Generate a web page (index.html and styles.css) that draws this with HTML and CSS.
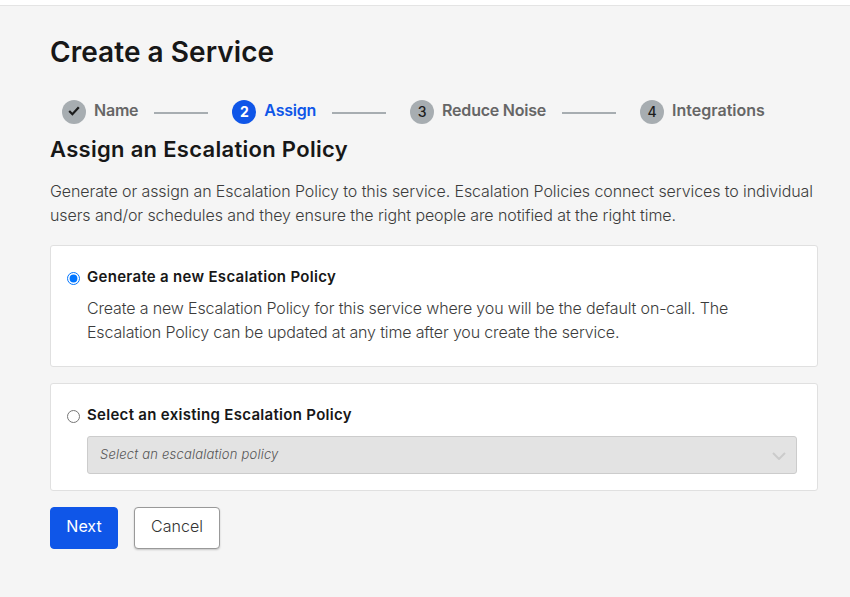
FILE: index.html
```html
<!DOCTYPE html>
<html lang="en">
<head>
    <meta charset="UTF-8">
    <title>Create a Service</title>
    <link rel="stylesheet" href="styles.css">
</head>
<body>
    <div class="page">
        <h1>Create a Service</h1>

        <!-- steps -->
        <div class="steps">
            <div class="step">
                <span class="badge">
                    <svg width="12" height="10" viewBox="0 0 12 10"><path d="M1.2 5 L4.4 8.2 L10.8 1.2" fill="none" stroke="#1c1c1c" stroke-width="2.2"/></svg>
                </span>
                <span class="step-name">Name</span>
            </div>
            <div class="line"></div>
            <div class="step active">
                <span class="badge">2</span>
                <span class="step-name">Assign</span>
            </div>
            <div class="line"></div>
            <div class="step">
                <span class="badge">3</span>
                <span class="step-name">Reduce Noise</span>
            </div>
            <div class="line"></div>
            <div class="step">
                <span class="badge">4</span>
                <span class="step-name">Integrations</span>
            </div>
        </div>

        <h2>Assign an Escalation Policy</h2>
        <p class="intro">Generate or assign an Escalation Policy to this service. Escalation Policies connect services to individual users and/or schedules and they ensure the right people are notified at the right time.</p>

        <div class="card card-new">
            <label class="option">
                <input type="radio" name="policy" checked>
                <span>Generate a new Escalation Policy</span>
            </label>
            <p class="option-text">Create a new Escalation Policy for this service where you will be the default on-call. The Escalation Policy can be updated at any time after you create the service.</p>
        </div>

        <div class="card card-existing">
            <label class="option">
                <input type="radio" name="policy">
                <span>Select an existing Escalation Policy</span>
            </label>
            <div class="select">
                <span>Select an escalalation policy</span>
                <svg width="14" height="8" viewBox="0 0 14 8"><path d="M1 1 L7 7 L13 1" fill="none" stroke="#cbcbcb" stroke-width="2"/></svg>
            </div>
        </div>

        <div class="buttons">
            <button class="button primary">Next</button>
            <button class="button">Cancel</button>
        </div>
    </div>
</body>
</html>
```

FILE: styles.css
```css
* {
    box-sizing: border-box;
}

body {
    font-family: "Inter", "Liberation Sans", sans-serif;
    background-color: #ffffff;
    color: #171717;
    margin: 0;
    padding: 0;
}

.page {
    height: 592px;
    margin-top: 5px;
    padding: 30px 32px 0 50px;
    background-color: #f5f5f5;
    border-top: 1px solid #e4e4e4;
}

h1 {
    margin: 0;
    font-size: 28px;
    line-height: 32px;
    font-weight: 600;
    letter-spacing: 0.05px;
}

/* steps */
.steps {
    display: flex;
    align-items: flex-start;
    margin-top: 32px;
    padding-left: 12px;
    height: 24px;
}

.step {
    display: flex;
    align-items: center;
}

.badge {
    display: flex;
    align-items: center;
    justify-content: center;
    width: 24px;
    height: 24px;
    padding-bottom: 2px;
    border-radius: 50%;
    background: #a7adb1;
    color: #1c1c1c;
    font-size: 14px;
    font-weight: 500;
}

.step-name {
    margin-left: 8px;
    margin-top: -4px;
    font-size: 16px;
    font-weight: 600;
    letter-spacing: -0.22px;
    color: #666666;
    line-height: 22px;
}

.step:last-child .step-name {
    letter-spacing: 0;
}

.active .badge {
    background: #0f56e8;
    color: #ffffff;
    font-weight: 700;
}

.active .step-name {
    color: #0f56e8;
}

.line {
    width: 54px;
    height: 2px;
    margin: 12px 24px 0 16px;
    background: #a7adb1;
}

h2 {
    margin: 11px 0 0;
    font-size: 22px;
    line-height: 28px;
    font-weight: 600;
    letter-spacing: 0.3px;
}

.intro {
    margin: 16px 0 0;
    font-size: 16px;
    line-height: 24px;
    font-weight: 300;
    letter-spacing: -0.09px;
    color: #3c3c3c;
}

/* cards */
.card {
    background: #ffffff;
    border: 1px solid #e0e0e0;
    border-radius: 3px;
    padding: 21px 20px 0 16px;
}

.card-new {
    height: 122px;
    margin-top: 18px;
}

.card-existing {
    height: 108px;
    margin-top: 16px;
}

.option {
    display: flex;
    align-items: center;
    font-size: 15px;
    line-height: 20px;
    font-weight: 600;
    letter-spacing: 0.3px;
}

.option input {
    width: 13px;
    height: 13px;
    margin: 3px 7px 0 0;
}

.option-text {
    margin: 9px 0 0 20px;
    font-size: 16px;
    line-height: 24px;
    font-weight: 300;
    letter-spacing: -0.15px;
    color: #3c3c3c;
}

.select {
    display: flex;
    align-items: center;
    justify-content: space-between;
    height: 38px;
    margin: 11px 0 0 20px;
    padding: 0 10px 2px 12px;
    background: #e3e3e3;
    border: 1px solid #cccccc;
    border-radius: 3px;
    font-size: 13px;
    font-style: italic;
    font-weight: 300;
    letter-spacing: 0.2px;
    color: #555555;
}

.select svg {
    margin-top: 4px;
}

/* buttons */
.buttons {
    display: flex;
    gap: 16px;
    margin-top: 16px;
}

.button {
    width: 86px;
    height: 42px;
    padding: 0 0 4px;
    background: #ffffff;
    border: 1px solid #999999;
    border-radius: 4px;
    box-shadow: 0 1px 2px rgba(0, 0, 0, 0.2);
    font-family: inherit;
    font-size: 16px;
    font-weight: 300;
    color: #333333;
}

.primary {
    width: 68px;
    background: #0f56e8;
    border-color: #0f56e8;
    box-shadow: none;
    color: #ffffff;
    font-weight: 400;
}
```
